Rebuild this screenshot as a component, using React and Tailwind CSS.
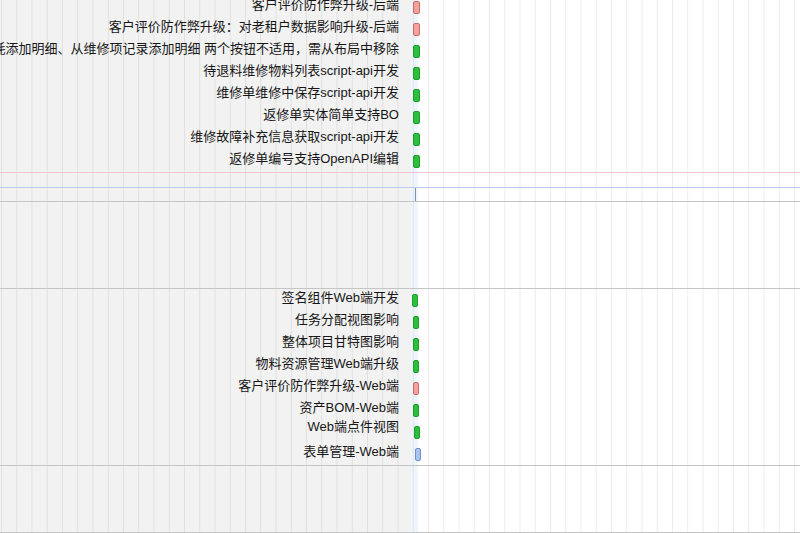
const topRows = [
  { name: '客户评价防作弊升级-后端', tone: 'pink' },
  { name: '客户评价防作弊升级：对老租户数据影响升级-后端', tone: 'pink' },
  { name: '维修单从物料消耗添加明细、从维修项记录添加明细 两个按钮不适用，需从布局中移除', tone: 'green' },
  { name: '待退料维修物料列表script-api开发', tone: 'green' },
  { name: '维修单维修中保存script-api开发', tone: 'green' },
  { name: '返修单实体简单支持BO', tone: 'green' },
  { name: '维修故障补充信息获取script-api开发', tone: 'green' },
  { name: '返修单编号支持OpenAPI编辑', tone: 'green' },
];

const bottomRows = [
  { name: '签名组件Web端开发', tone: 'green', offset: 'ml-[12.5px]' },
  { name: '任务分配视图影响', tone: 'green', offset: 'ml-[13.5px]' },
  { name: '整体项目甘特图影响', tone: 'green', offset: 'ml-[13.5px]' },
  { name: '物料资源管理Web端升级', tone: 'green', offset: 'ml-[13.5px]' },
  { name: '客户评价防作弊升级-Web端', tone: 'pink', offset: 'ml-[13.5px]' },
  { name: '资产BOM-Web端', tone: 'green', offset: 'ml-[13.5px]' },
  { name: 'Web端点件视图', tone: 'green', offset: 'ml-[14.5px]', lift: 'mb-[11px]' },
  { name: '表单管理-Web端', tone: 'blue', offset: 'ml-[15.5px]' },
];

const tones = {
  green: 'bg-[#2bbf3b] border-[#1f9c2d]',
  pink: 'bg-[#f8a09b] border-[#c2706b]',
  blue: 'bg-[#a9c4f3] border-[#6f8fc6]',
};

const Row = ({ name, tone, offset = 'ml-[14px]', width = 'w-[7px]', lift = 'mb-[5px]' }) => (
  <div className="flex h-[22px] shrink-0 items-center">
    <div className="flex w-[399px] shrink-0 justify-end">
      <span className={`whitespace-nowrap text-[13px] leading-[18px] text-[#161616] ${lift}`}>{name}</span>
    </div>
    <div className={`h-[13px] shrink-0 rounded-[2px] border ${width} ${offset} ${tones[tone]}`} />
  </div>
);

const App = () => {
  return (
    <div
      className="h-[533px] w-[800px] overflow-hidden bg-[linear-gradient(to_right,#f2f2f2_0,#f2f2f2_411.5px,#eff5fd_411.5px,#eff5fd_417.5px,#ffffff_417.5px)]"
      style={{ fontFamily: '"Liberation Sans", "Noto Sans CJK SC", sans-serif' }}
    >
      <div className="flex h-full flex-col bg-[linear-gradient(to_right,rgba(0,0,0,0.075)_1px,transparent_1px)] bg-size-[15.25px_100%] bg-position-[1px_0]">
        <div className="-mt-[4px] flex flex-col">
          {topRows.map((r) => (
            <Row key={r.name} {...r} />
          ))}
        </div>
        <div className="h-px shrink-0 bg-[#f2c6ce]" />
        <div className="h-[14px] shrink-0" />
        <div className="h-px shrink-0 bg-[#b9cdea]" />
        <div className="flex h-[13px] shrink-0">
          <div className="ml-[415px] w-px bg-[#7a90b4]" />
        </div>
        <div className="h-px shrink-0 bg-[#c4c4c4]" />
        <div className="h-[86px] shrink-0" />
        <div className="h-px shrink-0 bg-[#c4c4c4]" />
        <div className="flex flex-col">
          {bottomRows.map((r) => (
            <Row key={r.name} width="w-[6.5px]" {...r} />
          ))}
        </div>
        <div className="h-px shrink-0 bg-[#c4c4c4]" />
        <div className="h-[66px] shrink-0" />
        <div className="h-px shrink-0 bg-[#c4c4c4]" />
      </div>
    </div>
  );
};

export default App;
